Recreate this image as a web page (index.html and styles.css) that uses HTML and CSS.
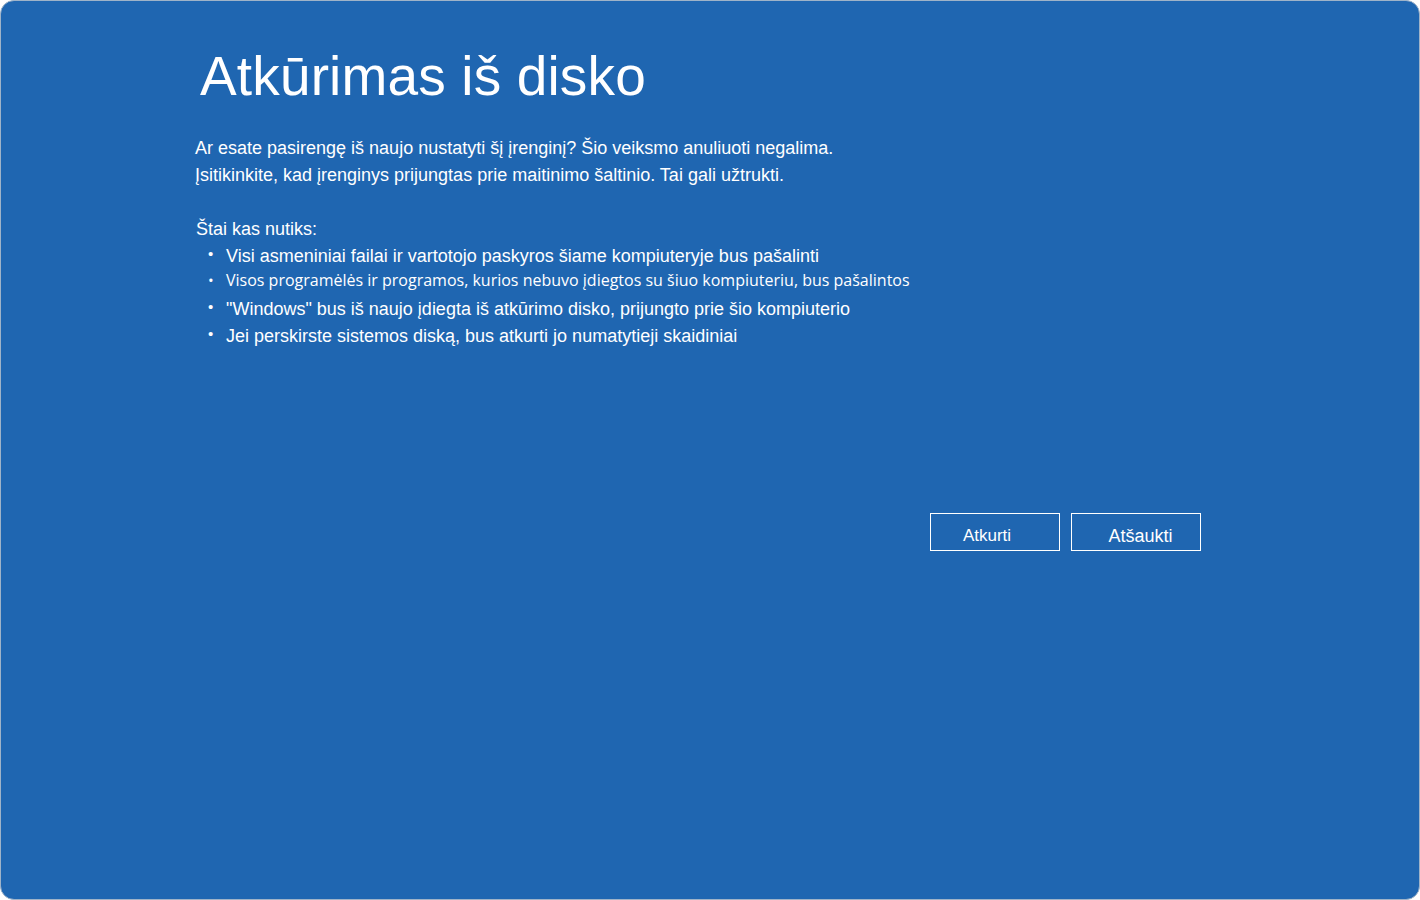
FILE: index.html
```html
<!DOCTYPE html>
<html lang="lt">
<head>
    <meta charset="UTF-8">
    <meta name="viewport" content="width=device-width, initial-scale=1.0">
    <title>Atkūrimas iš disko</title>
    <link rel="stylesheet" href="styles.css">
</head>
<body>
    <div class="screen">
        <div class="content">
            <h1 class="title">Atkūrimas iš disko</h1>
            <p class="intro">
                Ar esate pasirengę iš naujo nustatyti šį įrenginį? Šio veiksmo anuliuoti negalima.<br>
                Įsitikinkite, kad įrenginys prijungtas prie maitinimo šaltinio. Tai gali užtrukti.
            </p>
            <p class="lead">Štai kas nutiks:</p>
            <ul class="changes">
                <li>Visi asmeniniai failai ir vartotojo paskyros šiame kompiuteryje bus pašalinti</li>
                <li class="thin">Visos programėlės ir programos, kurios nebuvo įdiegtos su šiuo kompiuteriu, bus pašalintos</li>
                <li>"Windows" bus iš naujo įdiegta iš atkūrimo disko, prijungto prie šio kompiuterio</li>
                <li>Jei perskirste sistemos diską, bus atkurti jo numatytieji skaidiniai</li>
            </ul>
            <div class="actions">
                <button class="btn btn-restore">Atkurti</button>
                <button class="btn btn-cancel">Atšaukti</button>
            </div>
        </div>
    </div>
</body>
</html>
```

FILE: styles.css
```css
html, body {
    margin: 0;
    padding: 0;
    background-color: #fff;
}

body {
    font-family: "Liberation Sans", Arial, sans-serif;
    color: #fff;
}

.screen {
    box-sizing: border-box;
    width: 1420px;
    height: 900px;
    background-color: #1f66b1;
    border: 1px solid #9fb3c8;
    border-radius: 14px;
    overflow: hidden;
}

.content {
    width: 1006px;
    padding: 40px 0 0 194px;
}

.title {
    margin: 0 0 24px 5px;
    font-size: 55px;
    font-weight: normal;
    line-height: 70px;
    letter-spacing: 0.15px;
}

.intro {
    margin: 0;
    font-size: 18px;
    line-height: 27px;
}

.lead {
    margin: 27px 0 0 1px;
    font-size: 18px;
    line-height: 27px;
}

.changes {
    margin: 0;
    padding: 0 0 0 13px;
    list-style: none;
    font-size: 18px;
}

.changes li {
    position: relative;
    padding-left: 18px;
    line-height: 27.5px;
}

.changes li::before {
    content: "•";
    position: absolute;
    left: 0;
    top: -3px;
    font-size: 15px;
}

.changes .thin {
    font-family: "Open Sans", sans-serif;
    font-size: 16px;
    line-height: 18.5px;
    padding-bottom: 6.5px;
}

.changes .thin::before {
    top: 0;
}

.actions {
    display: flex;
    justify-content: flex-end;
    gap: 11px;
    margin-top: 162px;
}

.btn {
    box-sizing: border-box;
    width: 130px;
    height: 38px;
    padding: 8px 0 0;
    background: transparent;
    border: 1px solid #fff;
    color: #fff;
    font-family: "Liberation Sans", Arial, sans-serif;
}

.btn-restore {
    padding-right: 16px;
    font-size: 17px;
}

.btn-cancel {
    padding-top: 10px;
    padding-left: 9px;
    font-size: 18px;
}
```
